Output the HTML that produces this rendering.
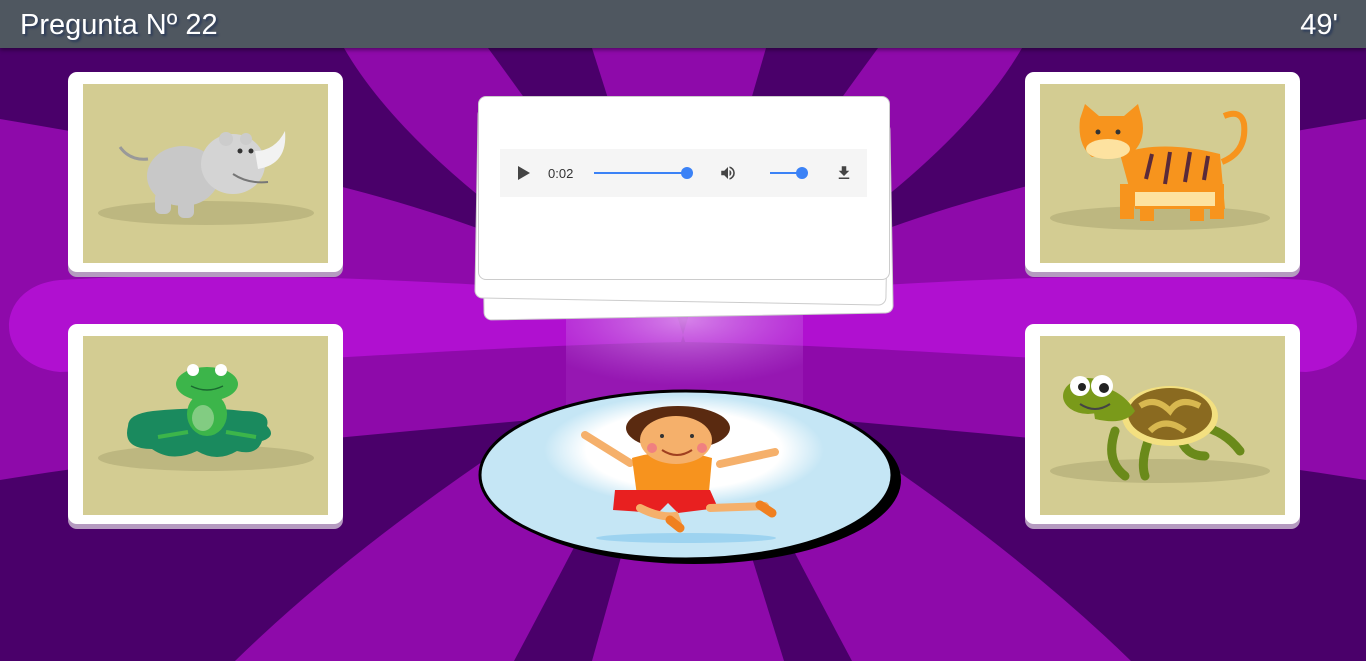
<!DOCTYPE html>
<html><head><meta charset="utf-8"><style>
*{margin:0;padding:0;box-sizing:border-box}
body{width:1366px;height:661px;overflow:hidden;position:relative;font-family:"Liberation Sans",sans-serif;background:#4a006a}
.bg{position:absolute;left:0;top:0;width:1366px;height:661px}
.top{position:absolute;left:0;top:0;width:1366px;height:48px;background:#4f5760;color:#fff;font-size:29px;box-shadow:0 2px 4px rgba(0,0,0,.4)}
.top span{position:absolute;top:9px;text-shadow:2px 2px 2px #2a3a5a}
.card{position:absolute;width:275px;height:200px;background:#fff;border-radius:9px;box-shadow:0 5px 0 #b59ac0}
.card .in{position:absolute;left:15px;top:12px;width:245px;height:179px;background:#d3cc92;overflow:hidden}
.qc{position:absolute;background:#fff;border:1px solid #ccc;border-radius:8px}
</style></head><body>
<svg class="bg" viewBox="0 0 1366 661">
<rect width="1366" height="661" fill="#4a006a"/>
<g id="half">
<g fill="#8e0aaa">
<path d="M683 335 Q420 180 344 48 L488 48 Q600 200 683 335Z"/>
<path d="M683 335 Q400 500 235 661 L514 661 Q600 500 683 335Z"/>
<path d="M683 330 C500 210 300 170 0 119 L0 480 C250 440 450 430 683 405 Z"/>
</g>
<path d="M683 300 C520 285 250 268 60 280 C-8 286 -8 366 60 372 C250 365 500 345 683 342 Z" fill="#b010d0"/>
</g>
<use href="#half" transform="translate(1366 0) scale(-1 1)"/>
<polygon points="683,335 592,48 766,48" fill="#8e0aaa"/>
<polygon points="683,335 592,661 784,661" fill="#8e0aaa"/>
<defs><radialGradient id="gl" cx="0.5" cy="0.1" r="0.7"><stop offset="0" stop-color="#e0a0f0" stop-opacity=".8"/><stop offset="1" stop-color="#c060e0" stop-opacity=".15"/></radialGradient></defs>
<rect x="566" y="310" width="237" height="95" fill="url(#gl)"/>
</svg>
<div class="top"><span style="left:20px">Pregunta Nº 22</span><span style="right:28px">49'</span></div>

<div class="card" style="left:68px;top:72px"><div class="in">
<svg width="245" height="179"><ellipse cx="123" cy="129" rx="108" ry="12" fill="#bdb780"/>
<path d="M65 75 q-18 2 -28 -12" stroke="#999" stroke-width="3" fill="none"/>
<ellipse cx="100" cy="92" rx="36" ry="30" fill="#c8c8c8"/><ellipse cx="150" cy="80" rx="32" ry="30" fill="#d4d4d4"/>
<rect x="72" y="108" width="16" height="22" rx="6" fill="#c8c8c8"/><rect x="95" y="108" width="16" height="26" rx="6" fill="#c8c8c8"/>
<path d="M175 85 q30 -5 27 -38 q-10 20 -30 20z" fill="#f2f2f2"/><circle cx="143" cy="55" r="7" fill="#ccc"/><circle cx="163" cy="55" r="6" fill="#ccc"/><circle cx="157" cy="67" r="2.5" fill="#333"/><circle cx="168" cy="67" r="2.5" fill="#333"/>
<path d="M150 90 q15 10 35 8" stroke="#777" stroke-width="2" fill="none"/></svg></div></div>

<div class="card" style="left:68px;top:324px"><div class="in">
<svg width="245" height="179"><ellipse cx="123" cy="122" rx="108" ry="13" fill="#bdb780"/>
<path d="M45 90 q0 -12 25 -15 q50 -5 90 0 q28 0 24 15 q10 10 -5 15 q-5 15 -25 10 q-20 12 -40 0 q-25 12 -45 -2 q-30 0 -24 -23z" fill="#1a8a5e"/>
<ellipse cx="124" cy="78" rx="20" ry="22" fill="#3cb54a"/><ellipse cx="124" cy="48" rx="31" ry="17" fill="#3cb54a"/>
<ellipse cx="120" cy="82" rx="11" ry="13" fill="#82cc82"/><circle cx="110" cy="34" r="6" fill="#fff"/><circle cx="138" cy="34" r="6" fill="#fff"/>
<path d="M108 50 q16 8 32 0" stroke="#1a6a30" stroke-width="1.5" fill="none"/>
<path d="M105 96 l-30 5 M143 96 l30 5" stroke="#3cb54a" stroke-width="4"/></svg></div></div>

<div class="card" style="left:1025px;top:72px"><div class="in">
<svg width="245" height="179"><ellipse cx="120" cy="134" rx="110" ry="12" fill="#bdb780"/>
<path d="M80 70 q40 -15 100 0 l5 55 h-90z" fill="#f7941d"/>
<rect x="80" y="100" width="14" height="35" fill="#f7941d"/><rect x="100" y="105" width="14" height="32" fill="#f7941d"/><rect x="150" y="105" width="14" height="32" fill="#f7941d"/><rect x="170" y="100" width="14" height="35" fill="#f7941d"/>
<rect x="95" y="108" width="80" height="14" fill="#fde2a0"/>
<path d="M182 78 q25 -10 22 -38 q-3 -15 -20 -8" stroke="#f7941d" stroke-width="6" fill="none"/>
<path d="M40 35 l5 -15 l14 12 h25 l14 -12 l4 15 q5 25 -15 38 h-35 q-15 -12 -12 -38z" fill="#f7941d"/><ellipse cx="68" cy="65" rx="22" ry="10" fill="#fde2a0"/>
<circle cx="58" cy="48" r="2.5" fill="#333"/><circle cx="78" cy="48" r="2.5" fill="#333"/>
<g stroke="#5a2a3a" stroke-width="4"><line x1="112" y1="70" x2="106" y2="95"/><line x1="130" y1="68" x2="125" y2="100"/><line x1="150" y1="68" x2="145" y2="98"/><line x1="168" y1="72" x2="164" y2="96"/></g></svg></div></div>

<div class="card" style="left:1025px;top:324px"><div class="in">
<svg width="245" height="179"><ellipse cx="120" cy="135" rx="110" ry="12" fill="#bdb780"/>
<path d="M75 95 q-10 30 10 45 M110 100 q-10 25 -5 40 M140 100 q5 20 25 20 M160 90 q25 5 40 25" stroke="#6a8a1a" stroke-width="9" fill="none" stroke-linecap="round"/>
<ellipse cx="130" cy="80" rx="48" ry="30" fill="#f3e080"/>
<ellipse cx="130" cy="78" rx="42" ry="26" fill="#8a6a20"/>
<path d="M100 70 q15 -10 30 5 q10 -15 30 -5 M110 95 q15 -15 35 0" stroke="#d8b850" stroke-width="6" fill="none"/>
<path d="M50 50 q30 0 45 25 q-10 15 -40 8z" fill="#7a9a1a"/>
<ellipse cx="48" cy="60" rx="25" ry="18" fill="#7a9a1a"/><circle cx="40" cy="50" r="10" fill="#fff"/><circle cx="62" cy="50" r="11" fill="#fff"/><circle cx="42" cy="51" r="4" fill="#222"/><circle cx="64" cy="52" r="5" fill="#222"/>
<path d="M40 68 q15 10 30 0" stroke="#444" stroke-width="2" fill="none"/></svg></div></div>

<div class="qc" style="left:482px;top:125px;width:410px;height:192px;transform:rotate(-1deg)"></div>
<div class="qc" style="left:476px;top:110px;width:412px;height:192px;transform:rotate(1deg)"></div>
<div class="qc" style="left:478px;top:96px;width:412px;height:184px">
<div style="position:absolute;left:21px;top:52px;width:367px;height:48px;background:#f5f5f5;font-size:13px;color:#333">
<svg style="position:absolute;left:18px;top:17px" width="12" height="14"><path d="M0 0L12 7L0 14Z" fill="#444"/></svg>
<span style="position:absolute;left:48px;top:17px">0:02</span>
<div style="position:absolute;left:94px;top:23px;width:92px;height:2px;background:#3b82f6"></div>
<div style="position:absolute;left:181px;top:18px;width:12px;height:12px;border-radius:50%;background:#3b82f6"></div>
<svg style="position:absolute;left:218px;top:15px" width="20" height="18" viewBox="0 0 24 24"><path d="M3 9v6h4l5 5V4L7 9H3zm13.5 3A4.5 4.5 0 0 0 14 8v8a4.5 4.5 0 0 0 2.5-4zM14 3.2v2.1a7 7 0 0 1 0 13.4v2.1a9 9 0 0 0 0-17.6z" fill="#444"/></svg>
<div style="position:absolute;left:270px;top:23px;width:30px;height:2px;background:#3b82f6"></div>
<div style="position:absolute;left:296px;top:18px;width:12px;height:12px;border-radius:50%;background:#3b82f6"></div>
<svg style="position:absolute;left:335px;top:15px" width="18" height="18" viewBox="0 0 24 24"><path d="M19 9h-4V3H9v6H5l7 7 7-7zM5 18v2h14v-2H5z" fill="#444"/></svg>
</div></div>

<svg style="position:absolute;left:470px;top:380px" width="440" height="200">
<defs><radialGradient id="wh"><stop offset=".7" stop-color="#fff"/><stop offset="1" stop-color="#fff" stop-opacity="0"/></radialGradient></defs>
<ellipse cx="224" cy="100" rx="207" ry="84" fill="#000"/>
<ellipse cx="216" cy="95" rx="206" ry="84" fill="#c5e6f5" stroke="#000" stroke-width="3"/>
<ellipse cx="214" cy="70" rx="140" ry="55" fill="url(#wh)"/>
<ellipse cx="216" cy="158" rx="90" ry="5" fill="#9dd3f0"/>
<path d="M115 55 l45 28 M305 72 l-55 12" stroke="#f5b06b" stroke-width="8" stroke-linecap="round"/>
<path d="M162 78 q40 -12 80 0 l-4 45 h-70z" fill="#f7931e"/>
<path d="M145 110 h95 l8 18 l-40 5 l-10 -10 l-10 10 l-45 -3z" fill="#e82020"/>
<path d="M170 128 q20 10 35 8 l3 8 M240 128 l55 -2" stroke="#f5b06b" stroke-width="8" stroke-linecap="round"/>
<path d="M200 140 l10 8 M290 125 l12 8" stroke="#f08020" stroke-width="9" stroke-linecap="round"/>
<ellipse cx="208" cy="48" rx="52" ry="22" fill="#5a2a10"/><ellipse cx="206" cy="60" rx="36" ry="24" fill="#f5b06b"/>
<circle cx="182" cy="68" r="5" fill="#f08080"/><circle cx="232" cy="68" r="5" fill="#f08080"/>
<circle cx="192" cy="56" r="2" fill="#333"/><circle cx="222" cy="56" r="2" fill="#333"/>
<path d="M192 70 q15 10 30 0" stroke="#a04020" stroke-width="2" fill="none"/>
</svg>
</body></html>
